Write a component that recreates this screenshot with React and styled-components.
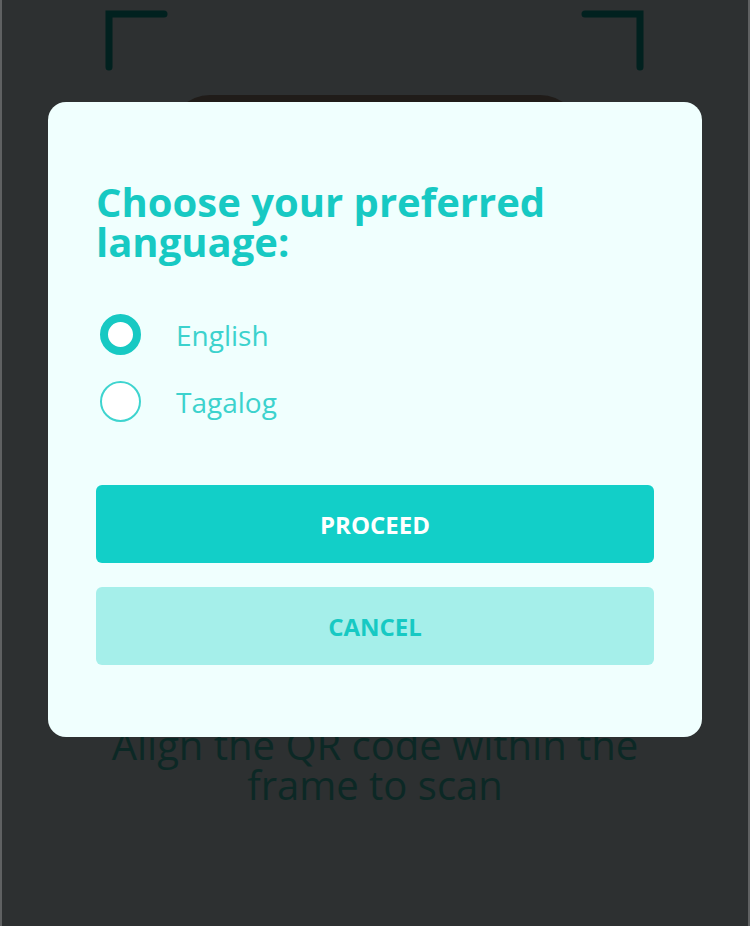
import React, { useState } from "react";
import styled, { createGlobalStyle } from "styled-components";

const Global = createGlobalStyle`
  html, body { margin: 0; padding: 0; }
  body { font-family: "Open Sans", "Noto Sans", sans-serif; background: #2d3031; }
  * { box-sizing: border-box; }
`;

const Screen = styled.div`
  position: relative;
  width: 750px;
  height: 926px;
  overflow: hidden;
  background: #2d3031;
  border-left: 2px solid #5f6162;
  border-right: 2px solid #5f6162;
  display: flex;
  flex-direction: column;
  align-items: center;
`;

const FrameRow = styled.div`
  width: 100%;
  display: flex;
  justify-content: space-between;
  padding: 10px 103px 0 102px;
  height: 95px;
  flex: none;
`;

const Viewfinder = styled.div`
  width: 410px;
  height: 300px;
  flex: none;
  border-radius: 40px;
  background: #201c19;
`;

const Hint = styled.p`
  margin: 330px 0 0;
  width: 560px;
  text-align: center;
  font-size: 40px;
  line-height: 40px;
  color: #0c2825;
`;

const Overlay = styled.div`
  position: absolute;
  left: 46px;
  top: 102px;
  width: 654px;
`;

const Modal = styled.div`
  background: #f0fffe;
  border-radius: 18px;
  padding: 80px 48px 72px;
  display: flex;
  flex-direction: column;
`;

const Title = styled.h2`
  margin: 0;
  font-size: 40px;
  line-height: 40px;
  font-weight: 700;
  color: #17c9c3;
`;

const Options = styled.div`
  margin-top: 52px;
  display: flex;
  flex-direction: column;
  gap: 26px;
`;

const Option = styled.label`
  display: flex;
  align-items: center;
  gap: 35px;
  padding-left: 4px;
  cursor: pointer;
`;

const Radio = styled.span`
  width: 41px;
  height: 41px;
  border-radius: 50%;
  background: #ffffff;
  border: ${(p) => (p.$checked ? "8px solid #17c9c3" : "2px solid #3ed4cf")};
  flex: none;
`;

const OptionText = styled.span`
  font-size: 28px;
  line-height: 40px;
  color: #3cd2cd;
`;

const Actions = styled.div`
  margin-top: 63px;
  display: flex;
  flex-direction: column;
  gap: 24px;
`;

const Button = styled.button`
  height: 78px;
  border: none;
  border-radius: 6px;
  font-family: "Open Sans", sans-serif;
  font-size: 24px;
  font-weight: 700;
  background: ${(p) => (p.$primary ? "#12cfc8" : "#a5efea")};
  color: ${(p) => (p.$primary ? "#ffffff" : "#17c9c3")};
  cursor: pointer;
`;

const Corner = ({ flip }) => (
  <svg width="64" height="64" viewBox="0 0 64 64" style={{ transform: flip ? "scaleX(-1)" : "none" }}>
    <path d="M5 57 V4 H60" fill="none" stroke="#01211f" strokeWidth="7" strokeLinecap="round" strokeLinejoin="miter" />
  </svg>
);

export default function App() {
  const [lang, setLang] = useState("English");
  return (
    <>
      <Global />
      <Screen>
        <FrameRow>
          <Corner />
          <Corner flip />
        </FrameRow>
        <Viewfinder />
        <Hint>Align the QR code within the frame to scan</Hint>
        <Overlay>
          <Modal>
            <Title>Choose your preferred language:</Title>
            <Options>
              {["English", "Tagalog"].map((l) => (
                <Option key={l} onClick={() => setLang(l)}>
                  <Radio $checked={lang === l} />
                  <OptionText>{l}</OptionText>
                </Option>
              ))}
            </Options>
            <Actions>
              <Button $primary>PROCEED</Button>
              <Button>CANCEL</Button>
            </Actions>
          </Modal>
        </Overlay>
      </Screen>
    </>
  );
}
